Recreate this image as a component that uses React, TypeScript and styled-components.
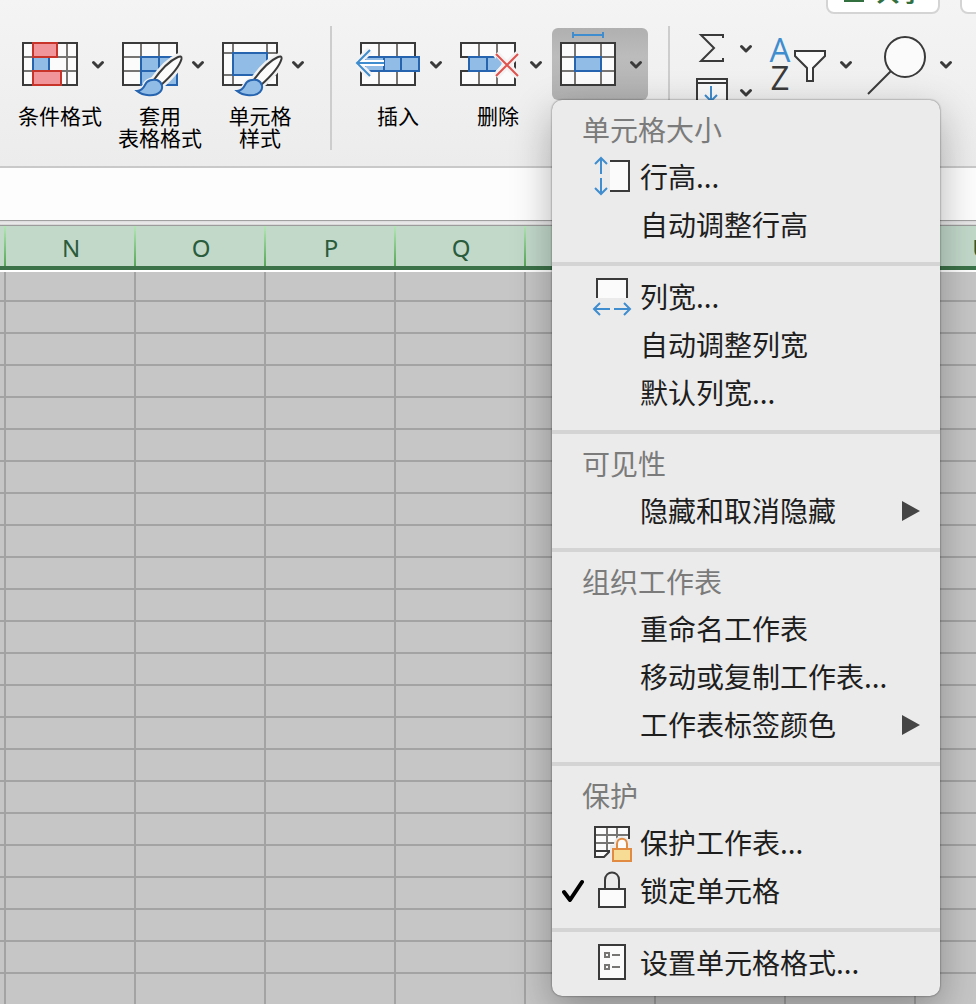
import React from "react";
import styled, { createGlobalStyle, css } from "styled-components";

const INK = "#3a3a3a";
const GRAY = "#777573";
const BLUE = "#2764b0";
const SKY = "#90bce6";
const ARROW = "#3f8dcf";
const PAPER = "#fbfbfb";

const Global = createGlobalStyle`
  *, *::before, *::after { box-sizing: border-box; }
  body {
    margin: 0;
    overflow: hidden;
    background: #c6c6c6;
    font-family: "Noto Sans CJK SC", "Noto Sans", sans-serif;
  }
  button {
    margin: 0;
    padding: 0;
    border: 0;
    background: none;
    color: inherit;
    font: inherit;
    cursor: default;
  }
  svg { display: block; flex: none; }
`;

const Window = styled.div`
  display: flex;
  flex-direction: column;
  height: 100vh;
  overflow: hidden;
`;

const Ribbon = styled.header`
  flex: none;
  background: linear-gradient(#f4f4f4, #ececec);
  border-bottom: 2px solid #c9c9c9;
`;

const TopStrip = styled.div`
  display: flex;
  justify-content: flex-end;
  align-items: flex-end;
  gap: 20px;
  height: 26px;
  padding-bottom: 12px;
`;

const StripButton = styled.button<{ $cut?: boolean }>`
  display: flex;
  flex: none;
  align-items: center;
  gap: 12px;
  height: 44px;
  border: 2px solid #d4d4d4;
  border-radius: 8px;
  background: #fff;
  color: #33703f;
  font-size: 24px;
  font-weight: 700;
  line-height: 32px;
  ${(p) =>
    p.$cut
      ? css`
          width: 60px;
          margin-right: -44px;
        `
      : css`
          padding: 0 14px 0 16px;
        `}
`;

const StripText = styled.span`
  padding-bottom: 2px;
`;

const Tools = styled.div`
  display: flex;
  align-items: flex-start;
  height: 140px;
  padding-left: 10px;
`;

const Group = styled.div`
  display: flex;
  flex: none;
  padding-top: 2px;
`;

const Divider = styled.div`
  flex: none;
  width: 2px;
  height: 124px;
  margin: 0 16px 0 20px;
  background: #cdcdcd;
`;

const ToolButton = styled.button`
  display: flex;
  flex-direction: column;
  align-items: center;
  gap: 4px;
  width: 100px;
`;

const IconRow = styled.span`
  display: flex;
  align-items: center;
  width: 100%;
`;

const Label = styled.span`
  color: #000;
  font-size: 21px;
  line-height: 22px;
  text-align: center;
  white-space: pre-line;
`;

const Stack = styled.div`
  display: flex;
  flex-direction: column;
  gap: 4px;
  width: 72px;
`;

const SmallButton = styled.button`
  display: flex;
  align-items: center;
  height: 40px;
`;

const MenuAnchor = styled.div`
  position: relative;
  width: 96px;
  height: 72px;
  margin-left: 4px;
`;

const PressedButton = styled.button`
  display: flex;
  align-items: center;
  width: 100%;
  height: 100%;
  border-radius: 6px;
  background: linear-gradient(#b0b0b0, #bcbcbc 40%, #b2b2b2);
`;

const Menu = styled.div`
  position: absolute;
  z-index: 2;
  top: 100%;
  left: 0;
  width: 388px;
  padding: 7px 0 9px;
  border-radius: 10px;
  background: #ebebeb;
  box-shadow: 0 0 2px rgba(0, 0, 0, 0.6), 0 14px 40px rgba(0, 0, 0, 0.3);
`;

const MenuHeading = styled.div`
  height: 46px;
  padding-left: 30px;
  color: #7b7b7b;
  font-size: 28px;
  line-height: 44px;
`;

const MenuItem = styled.button`
  display: grid;
  grid-template-columns: 22px 40px 1fr 18px;
  align-items: center;
  gap: 8px;
  width: 100%;
  height: 48px;
  padding: 0 20px 0 10px;
  color: #1e1e1e;
  font-size: 28px;
  line-height: 46px;
  text-align: left;
  white-space: nowrap;
`;

const ItemText = styled.span`
  padding-bottom: 2px;
`;

const MenuLine = styled.div`
  height: 4px;
  margin: 13px 0 7px;
  background: #d4d4d4;
`;

const FormulaInput = styled.input`
  flex: none;
  width: 100%;
  height: 52px;
  padding: 0 16px;
  border: 0;
  outline: 0;
  background: #fdfdfd;
  font: inherit;
  font-size: 24px;
`;

const Splitter = styled.div`
  flex: none;
  height: 6px;
  border-top: 1px solid #a0a0a0;
  border-bottom: 1px solid #9c9c9c;
  background: linear-gradient(#dcdadc, #ecebec 60%, #cfcfcf);
`;

const SheetArea = styled.main`
  flex: 1;
  min-height: 0;
  overflow: hidden;
`;

const Sheet = styled.table`
  width: 1046px;
  min-width: 100%;
  table-layout: fixed;
  border-collapse: separate;
  border-spacing: 0;
`;

const Col = styled.col<{ $w: number }>`
  width: ${(p) => p.$w}px;
`;

const HeadCell = styled.th`
  height: 46px;
  padding: 4px 0 0;
  background: linear-gradient(#b4e8b6, #56a656) right top / 2px 40px no-repeat,
    linear-gradient(#fff, #fff) left bottom / 100% 2px no-repeat,
    linear-gradient(#3b7248, #3b7248) left bottom / 100% 6px no-repeat, #c2d9ca;
  color: #2a5c3b;
  font-family: "Noto Sans", sans-serif;
  font-size: 24px;
  font-weight: 400;
  line-height: 36px;
  vertical-align: top;
`;

const Cell = styled.td<{ $first?: boolean }>`
  height: ${(p) => (p.$first ? 30 : 32)}px;
  padding: 0;
  border-right: 2px solid #a3a3a3;
  border-bottom: 2px solid #a3a3a3;
  background: #c6c6c6;
`;

const Chevron = () => (
  <svg width="16" height="16" viewBox="0 0 16 16" fill="none" stroke={INK} strokeWidth="3" strokeLinecap="round" strokeLinejoin="round">
    <path d="M3.5 6.5L8 11L12.5 6.5" />
  </svg>
);

const ToolSvg = ({ width = 80, height = 72, children }: { width?: number; height?: number; children: React.ReactNode }) => (
  <svg width={width} height={height} viewBox={`0 0 ${width} ${height}`} fill="none" strokeWidth="2">
    {children}
  </svg>
);

const handle = "M43 53C50 43 59 33 68 29C70 28 72 28 71.5 31C69 40 60 49 51 57Z";
const bristle = "M27 63C31 63 33 61 35 57C37 52 43 51 47 52C52 54 54 60 50 64C45 69 33 68 27 63Z";

const Brush = () => (
  <>
    <path d={handle} stroke="#f1f1f1" strokeWidth="7" />
    <path d={bristle} stroke="#f1f1f1" strokeWidth="5" />
    <path d={handle} fill={PAPER} stroke={INK} />
    <path d={bristle} fill={SKY} stroke={BLUE} />
  </>
);

const ConditionalIcon = () => (
  <ToolSvg>
    <rect x="13" y="15" width="54" height="42" fill={PAPER} />
    <path d="M13 29H67M13 43H67M57 15V57" stroke={GRAY} />
    <rect x="40" y="30" width="16" height="12" fill={PAPER} />
    <rect x="13" y="15" width="54" height="42" stroke={INK} />
    <rect x="23" y="29" width="16" height="14" fill={SKY} stroke={BLUE} />
    <rect x="23" y="15" width="24" height="14" fill="#f2959a" stroke="#c8342a" />
    <rect x="23" y="43" width="28" height="14" fill="#f2959a" stroke="#c8342a" />
  </ToolSvg>
);

const TableStyleIcon = () => (
  <ToolSvg>
    <rect x="13" y="15" width="54" height="42" fill={PAPER} />
    <path d="M13 29H31M13 43H31M31 15V29M49 15V29" stroke={GRAY} />
    <rect x="13" y="15" width="54" height="42" stroke={INK} />
    <rect x="31" y="29" width="36" height="28" fill={SKY} stroke={BLUE} />
    <path d="M31 43H67M49 29V57" stroke={BLUE} />
    <Brush />
  </ToolSvg>
);

const CellStyleIcon = () => (
  <ToolSvg>
    <rect x="13" y="15" width="54" height="42" fill={PAPER} />
    <path d="M13 25H67M13 47H67M23 15V57M57 15V57" stroke={GRAY} />
    <rect x="13" y="15" width="54" height="42" stroke={INK} />
    <rect x="23" y="25" width="34" height="22" fill={SKY} stroke={BLUE} />
    <Brush />
  </ToolSvg>
);

const InsertIcon = () => (
  <ToolSvg>
    <rect x="13" y="15" width="54" height="42" fill={PAPER} />
    <path d="M31 15V57M49 15V57" stroke={GRAY} />
    <rect x="13" y="15" width="54" height="42" stroke={INK} />
    <path d="M17 29H71V43H17Z" fill={SKY} stroke={BLUE} />
    <path d="M36 29V43M53 29V43" stroke={BLUE} />
    <path d="M22 22L9 35L22 48" stroke="#f2f2f2" strokeWidth="7" />
    <path d="M9 35H36" stroke="#fff" strokeWidth="6" />
    <path d="M22 22L9 35L22 48M9 35H36" stroke={ARROW} />
  </ToolSvg>
);

const DeleteIcon = () => (
  <ToolSvg>
    <path d="M13 15H67V57H13V43H21V29H13Z" fill={PAPER} />
    <path d="M31 15V29M49 15V29M31 43V57M49 43V57" stroke={GRAY} />
    <path d="M22 29H13V15H67V57H13V43H22" stroke={INK} />
    <path d="M21 29H48L54 36L48 43H21Z" fill={SKY} />
    <path d="M48 29H21V43H48M39 29V43" stroke={BLUE} />
    <path d="M48 26L70 48M70 26L48 48" stroke="#f2f2f2" strokeWidth="7" />
    <path d="M54 35L48 28V42Z" fill={SKY} />
    <path d="M48 26L70 48M70 26L48 48" stroke="#f2f2f2" strokeWidth="4" />
    <path d="M48 26L70 48M70 26L48 48" stroke="#e0524d" />
  </ToolSvg>
);

const FormatIcon = () => (
  <ToolSvg width={76}>
    <rect x="9" y="15" width="54" height="42" fill={PAPER} />
    <path d="M9 29H63M9 43H63M23 15V57M49 15V57" stroke={GRAY} />
    <rect x="9" y="15" width="54" height="42" stroke={INK} />
    <rect x="23" y="29" width="26" height="14" fill={SKY} stroke={BLUE} />
    <path d="M21 7H51M21 4V10M51 4V10" stroke={ARROW} />
  </ToolSvg>
);

const SumIcon = () => (
  <ToolSvg width={52} height={40}>
    <path d="M37 10V7H15L28 20L15 33H37V30" stroke={INK} />
  </ToolSvg>
);

const FillIcon = () => (
  <ToolSvg width={52} height={40}>
    <rect x="11" y="7" width="30" height="30" fill={PAPER} stroke={INK} />
    <path d="M11 11H41" stroke={INK} />
    <path d="M25 14V29M19 23L25 29L31 23" stroke={ARROW} />
  </ToolSvg>
);

const SortIcon = () => (
  <ToolSvg>
    <g fontFamily="'Open Sans', 'Noto Sans', sans-serif" fontWeight="400" fontSize="33" textAnchor="middle">
      <text x="22" y="34" fill={ARROW}>A</text>
      <text x="22" y="62" fill={INK}>Z</text>
    </g>
    <path d="M37 23H67V28L55 40V53H49V40L37 28Z" fill={PAPER} stroke={INK} />
  </ToolSvg>
);

const FindIcon = () => (
  <ToolSvg>
    <circle cx="47" cy="29" r="20" fill={PAPER} stroke={INK} />
    <path d="M33 43L10 66" stroke={INK} />
  </ToolSvg>
);

const ShareIcon = () => (
  <svg width="20" height="20" viewBox="0 0 20 20" fill="none" stroke="#33703f" strokeWidth="2">
    <path d="M1 9V19H19V9M10 14V2M6 6L10 2L14 6" />
  </svg>
);

const MenuSvg = ({ children }: { children: React.ReactNode }) => (
  <svg width="40" height="48" viewBox="0 0 40 48" fill="none" strokeWidth="2">
    {children}
  </svg>
);

const RowHeightIcon = () => (
  <MenuSvg>
    <path d="M18 8H37V38H18" fill={PAPER} stroke={INK} />
    <path d="M9 21V5M3 11L9 5L15 11M9 25V41M3 35L9 41L15 35" stroke={ARROW} />
  </MenuSvg>
);

const ColumnWidthIcon = () => (
  <MenuSvg>
    <path d="M5 25V6H35V25" fill={PAPER} stroke={INK} />
    <path d="M18 36H2M8 30L2 36L8 42M22 36H38M32 30L38 36L32 42" stroke={ARROW} />
  </MenuSvg>
);

const ProtectSheetIcon = () => (
  <MenuSvg>
    <path d="M3 8H37V32H18L12 38H3Z" fill={PAPER} />
    <path d="M15 8V32M25 8V32M3 16H37M3 24H37" stroke={GRAY} />
    <path d="M37 20V8H3V38H12L18 32H3" stroke={INK} />
    <path d="M20 44V28H24V25C24 17 36 17 36 25V28H40V44Z" fill="#ebebeb" stroke="#ebebeb" strokeWidth="4" />
    <path d="M25 30V25C25 18 35 18 35 25V30" fill={PAPER} stroke="#e08a42" />
    <rect x="21" y="30" width="18" height="12" fill="#f6dc94" stroke="#e08a42" />
  </MenuSvg>
);

const LockIcon = () => (
  <MenuSvg>
    <path d="M13 22V13C13 3 27 3 27 13V22" stroke={INK} />
    <rect x="7" y="22" width="26" height="18" fill={PAPER} stroke={INK} />
  </MenuSvg>
);

const FormatCellsIcon = () => (
  <MenuSvg>
    <rect x="7" y="6" width="26" height="34" fill={PAPER} stroke={INK} />
    <path d="M13 14H17V18H13ZM13 26H17V30H13ZM20 16H28M20 28H28" stroke={GRAY} />
  </MenuSvg>
);

const CheckMark = () => (
  <svg width="22" height="48" viewBox="0 0 22 48" fill="none" stroke="#000" strokeWidth="4" strokeLinecap="round" strokeLinejoin="round">
    <path d="M2 25L8 33L20 15" />
  </svg>
);

const SubmenuArrow = () => (
  <svg width="18" height="20" viewBox="0 0 18 20" fill="#454545">
    <path d="M0 0L18 10L0 20Z" />
  </svg>
);

type ItemProps = { icon?: React.ReactNode; checked?: boolean; submenu?: boolean; children: React.ReactNode };

const Item = ({ icon, checked, submenu, children }: ItemProps) => (
  <MenuItem
    type="button"
    role={checked ? "menuitemcheckbox" : "menuitem"}
    aria-checked={checked}
    aria-haspopup={submenu ? "menu" : undefined}
  >
    <span>{checked && <CheckMark />}</span>
    <span>{icon}</span>
    <ItemText>{children}</ItemText>
    {submenu && <SubmenuArrow />}
  </MenuItem>
);

const Tool = ({ icon, label }: { icon: React.ReactNode; label?: string }) => (
  <ToolButton type="button">
    <IconRow>
      {icon}
      <Chevron />
    </IconRow>
    {label && <Label>{label}</Label>}
  </ToolButton>
);

const FormatMenu = () => (
  <Menu role="menu">
    <MenuHeading>单元格大小</MenuHeading>
    <Item icon={<RowHeightIcon />}>行高...</Item>
    <Item>自动调整行高</Item>
    <MenuLine />
    <Item icon={<ColumnWidthIcon />}>列宽...</Item>
    <Item>自动调整列宽</Item>
    <Item>默认列宽...</Item>
    <MenuLine />
    <MenuHeading>可见性</MenuHeading>
    <Item submenu>隐藏和取消隐藏</Item>
    <MenuLine />
    <MenuHeading>组织工作表</MenuHeading>
    <Item>重命名工作表</Item>
    <Item>移动或复制工作表...</Item>
    <Item submenu>工作表标签颜色</Item>
    <MenuLine />
    <MenuHeading>保护</MenuHeading>
    <Item icon={<ProtectSheetIcon />}>保护工作表...</Item>
    <Item icon={<LockIcon />} checked>锁定单元格</Item>
    <MenuLine />
    <Item icon={<FormatCellsIcon />}>设置单元格格式...</Item>
  </Menu>
);

const columns = ["", "N", "O", "P", "Q", "", "", "", "U"];
const rows = Array.from({ length: 23 }, (_, i) => i);

export default function App() {
  return (
    <Window>
      <Global />
      <Ribbon>
        <TopStrip>
          <StripButton type="button">
            <ShareIcon />
            <StripText>共享</StripText>
          </StripButton>
          <StripButton type="button" $cut />
        </TopStrip>
        <Tools>
          <Group>
            <Tool icon={<ConditionalIcon />} label="条件格式" />
            <Tool icon={<TableStyleIcon />} label={"套用\n表格格式"} />
            <Tool icon={<CellStyleIcon />} label={"单元格\n样式"} />
          </Group>
          <Divider />
          <Group>
            <Tool icon={<InsertIcon />} label="插入" />
            <Tool icon={<DeleteIcon />} label="删除" />
            <MenuAnchor>
              <PressedButton type="button" aria-haspopup="menu" aria-expanded>
                <FormatIcon />
                <Chevron />
              </PressedButton>
              <FormatMenu />
            </MenuAnchor>
          </Group>
          <Divider />
          <Group>
            <Stack>
              <SmallButton type="button">
                <SumIcon />
                <Chevron />
              </SmallButton>
              <SmallButton type="button">
                <FillIcon />
                <Chevron />
              </SmallButton>
            </Stack>
            <Tool icon={<SortIcon />} />
            <Tool icon={<FindIcon />} />
          </Group>
        </Tools>
      </Ribbon>
      <FormulaInput type="text" />
      <Splitter />
      <SheetArea>
        <Sheet>
          <colgroup>
            {columns.map((_, i) => (
              <Col key={i} $w={i === 0 ? 6 : 130} />
            ))}
          </colgroup>
          <thead>
            <tr>
              {columns.map((name, i) => (
                <HeadCell key={i} scope="col">{name}</HeadCell>
              ))}
            </tr>
          </thead>
          <tbody>
            {rows.map((r) => (
              <tr key={r}>
                {columns.map((_, i) => (
                  <Cell key={i} $first={r === 0} />
                ))}
              </tr>
            ))}
          </tbody>
        </Sheet>
      </SheetArea>
    </Window>
  );
}
